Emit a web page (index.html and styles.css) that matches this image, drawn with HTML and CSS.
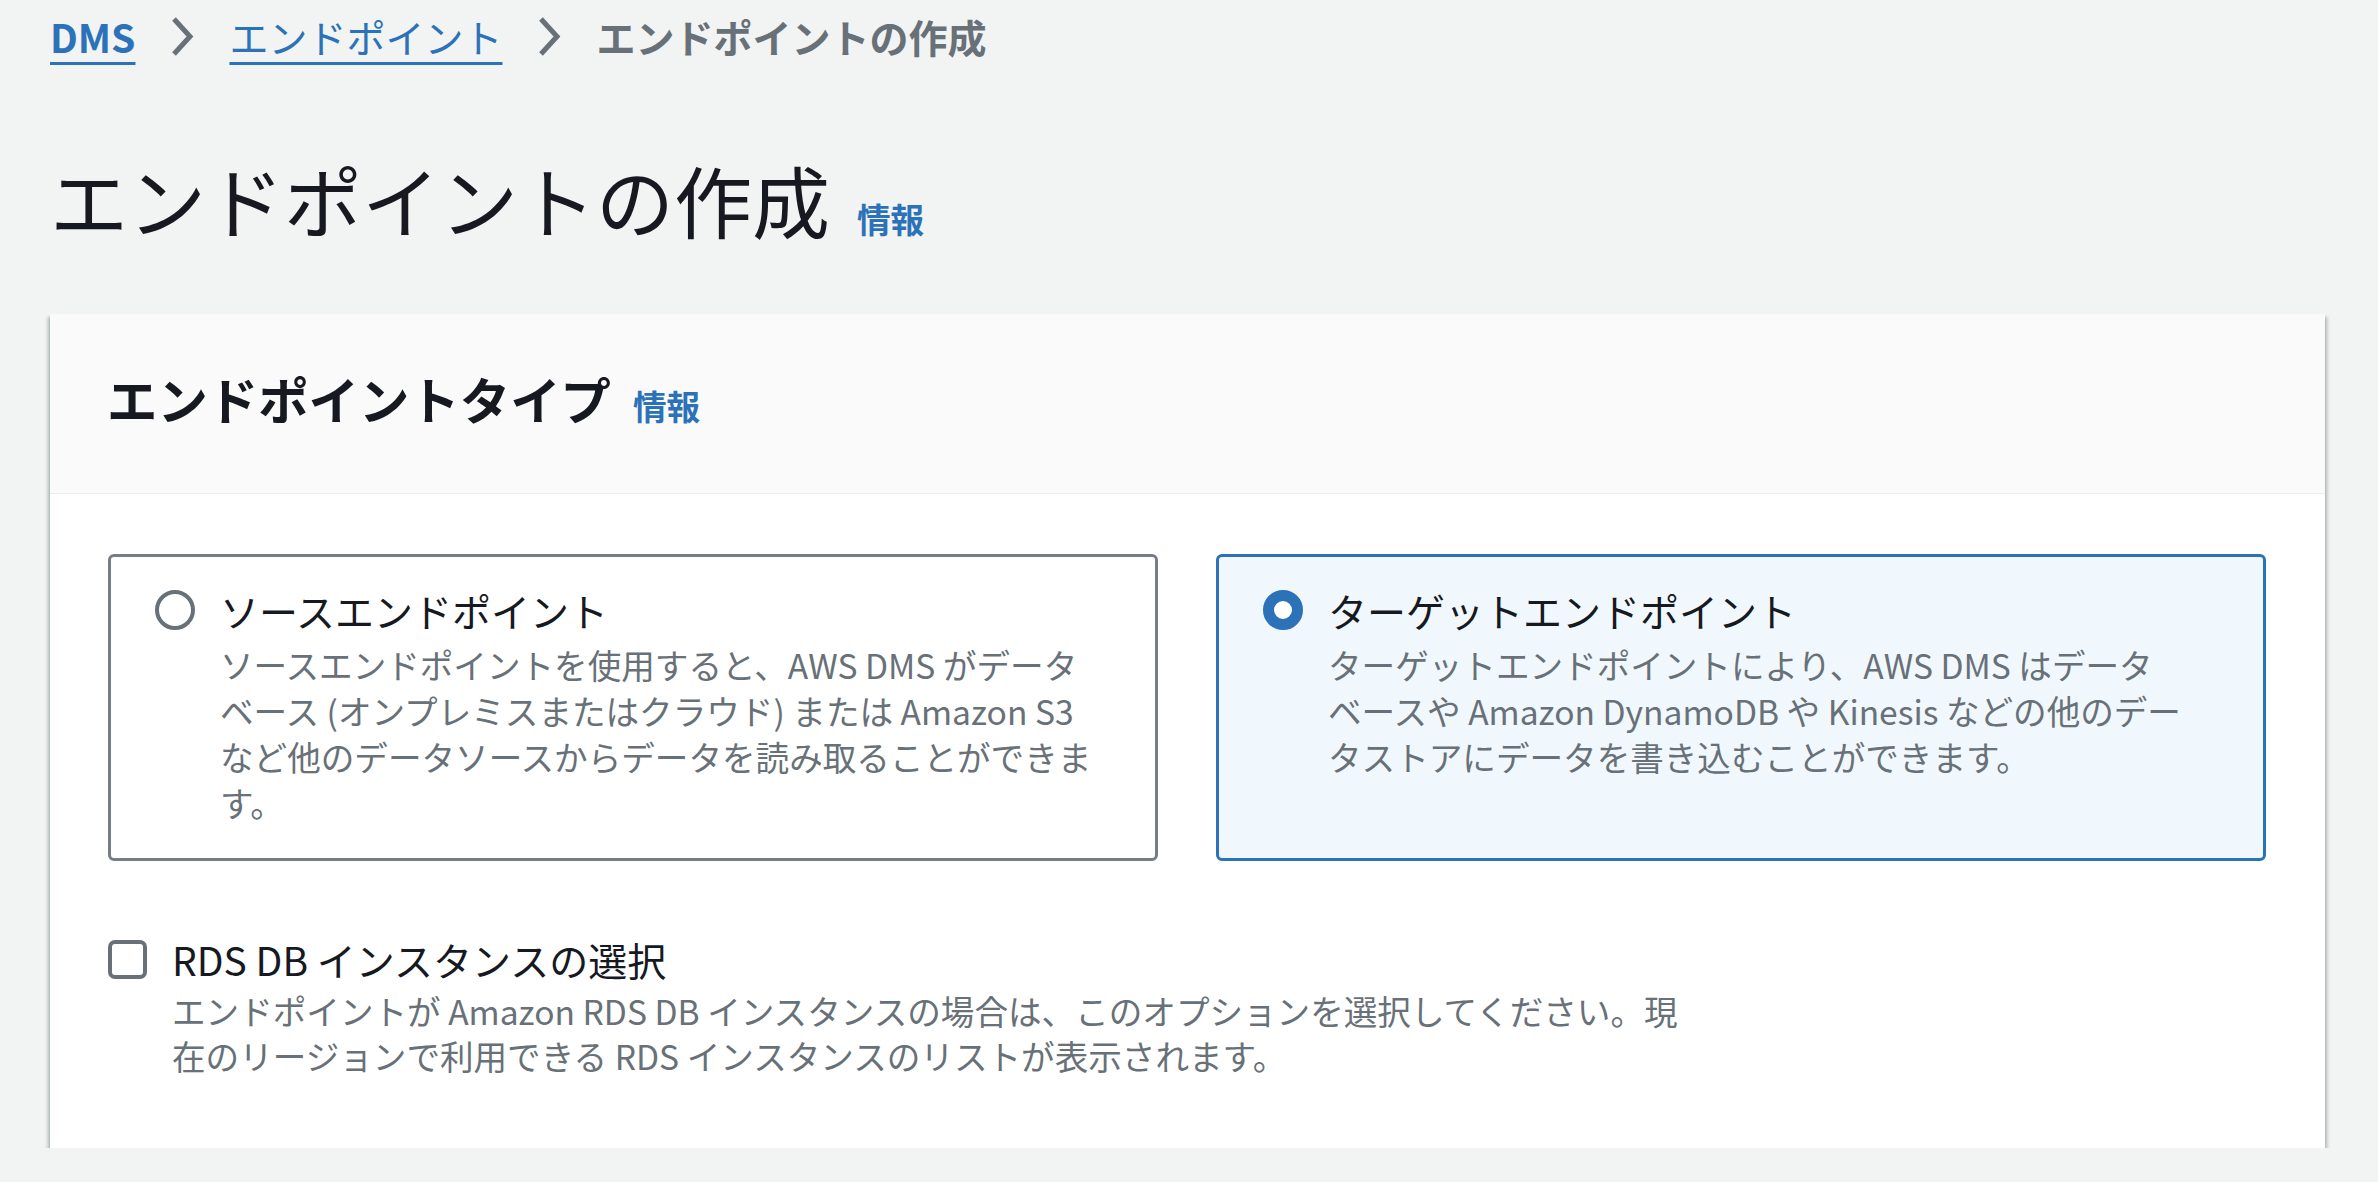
FILE: index.html
```html
<!DOCTYPE html>
<html lang="ja">
<head>
<meta charset="utf-8">
<title>エンドポイントの作成</title>
<link rel="stylesheet" href="styles.css">
</head>
<body>
<div class="page">
  <nav class="breadcrumbs">
    <a class="crumb-link crumb-strong" href="#">DMS</a>
    <svg class="chev" width="24" height="41" viewBox="0 0 24 41"><polyline points="4,3 20,20.5 4,38" fill="none" stroke="#687078" stroke-width="5"/></svg>
    <a class="crumb-link" href="#">エンドポイント</a>
    <svg class="chev" width="24" height="41" viewBox="0 0 24 41"><polyline points="4,3 20,20.5 4,38" fill="none" stroke="#687078" stroke-width="5"/></svg>
    <span class="crumb-current">エンドポイントの作成</span>
  </nav>

  <h1 class="page-title">エンドポイントの作成<a class="info info-h1" href="#">情報</a></h1>

  <section class="container">
    <header class="container-header">
      <h2 class="section-title">エンドポイントタイプ<a class="info info-h2" href="#">情報</a></h2>
    </header>
    <div class="container-body">
      <div class="tiles">
        <div class="tile">
          <span class="radio"></span>
          <div class="tile-text">
            <div class="tile-title">ソースエンドポイント</div>
            <div class="tile-desc">ソースエンドポイントを使用すると、AWS DMS がデータ<br>ベース (オンプレミスまたはクラウド) または Amazon S3<br>など他のデータソースからデータを読み取ることができま<br>す。</div>
          </div>
        </div>
        <div class="tile tile-selected">
          <span class="radio radio-checked"></span>
          <div class="tile-text">
            <div class="tile-title">ターゲットエンドポイント</div>
            <div class="tile-desc">ターゲットエンドポイントにより、AWS DMS はデータ<br>ベースや Amazon DynamoDB や Kinesis などの他のデー<br>タストアにデータを書き込むことができます。</div>
          </div>
        </div>
      </div>

      <div class="check-row">
        <span class="checkbox"></span>
        <div class="check-text">
          <div class="check-label">RDS DB インスタンスの選択</div>
          <div class="check-desc">エンドポイントが Amazon RDS DB インスタンスの場合は、このオプションを選択してください。現<br>在のリージョンで利用できる RDS インスタンスのリストが表示されます。</div>
        </div>
      </div>
    </div>
  </section>
</div>
</body>
</html>
```

FILE: styles.css
```css
html, body {
  margin: 0;
  padding: 0;
  background: #f2f3f3;
}

body {
  font-family: "Noto Sans CJK JP", "Liberation Sans", sans-serif;
  color: #16191f;
}

.page {
  padding: 8px 53px 0 50px;
}

.breadcrumbs {
  display: flex;
  align-items: center;
  height: 56px;
  font-size: 39px;
  line-height: 56px;
}

.crumb-link {
  color: #2b72b8;
  text-decoration: underline;
  text-decoration-thickness: 3px;
  text-underline-offset: 9px;
}

.crumb-strong {
  font-weight: 700;
}

.chev {
  margin: 0 35px;
  flex: none;
}

.crumb-current {
  color: #687078;
  font-weight: 700;
}

.page-title {
  margin: 85px 0 0 0;
  font-size: 78px;
  line-height: 100px;
  font-weight: 400;
  color: #16191f;
}

.info {
  color: #2b72b8;
  font-weight: 700;
  font-size: 33.6px;
  line-height: 1;
  text-decoration: none;
}

.info-h1 {
  margin-left: 27px;
}

.info-h2 {
  margin-left: 22px;
}

.container {
  margin-top: 65px;
  background: #ffffff;
  box-shadow: 0 3px 3px 0 rgba(0, 28, 36, 0.3), 3px 3px 3px 0 rgba(0, 28, 36, 0.15), -3px 3px 3px 0 rgba(0, 28, 36, 0.15);
}

.container-header {
  background: #fafafa;
  border-bottom: 1px solid #eaeded;
  padding: 54px 58px 63px 57px;
}

.section-title {
  margin: 0;
  font-size: 50.4px;
  line-height: 62px;
  font-weight: 700;
}

.container-body {
  padding: 60px 59px 70px 58px;
}

.tiles {
  display: grid;
  grid-template-columns: 1fr 1fr;
  gap: 58px;
}

.tile {
  display: flex;
  align-items: flex-start;
  border: 3px solid #777d85;
  border-radius: 6px;
  padding: 25px 44px 32px 44px;
  background: #ffffff;
}

.tile-selected {
  border-color: #2b72b8;
  background: #f1f8fd;
}

.radio {
  flex: none;
  box-sizing: border-box;
  width: 40px;
  height: 40px;
  margin-top: 8px;
  border-radius: 50%;
  border: 4px solid #687078;
  background: #ffffff;
}

.radio-checked {
  border: 11px solid #2b72b8;
}

.tile-text {
  margin-left: 25px;
}

.tile-title {
  font-size: 39px;
  line-height: 56px;
  color: #16191f;
}

.tile-desc {
  margin-top: 4px;
  font-size: 33.6px;
  line-height: 46px;
  color: #687078;
}

.check-row {
  display: flex;
  align-items: flex-start;
  margin-top: 70px;
}

.checkbox {
  flex: none;
  box-sizing: border-box;
  width: 39px;
  height: 39px;
  margin-top: 9px;
  border: 4px solid #687078;
  border-radius: 7px;
  background: #ffffff;
}

.check-text {
  margin-left: 25px;
}

.check-label {
  font-size: 39px;
  line-height: 56px;
  color: #16191f;
}

.check-desc {
  margin-top: 1px;
  font-size: 33.6px;
  line-height: 45px;
  color: #687078;
}
```
